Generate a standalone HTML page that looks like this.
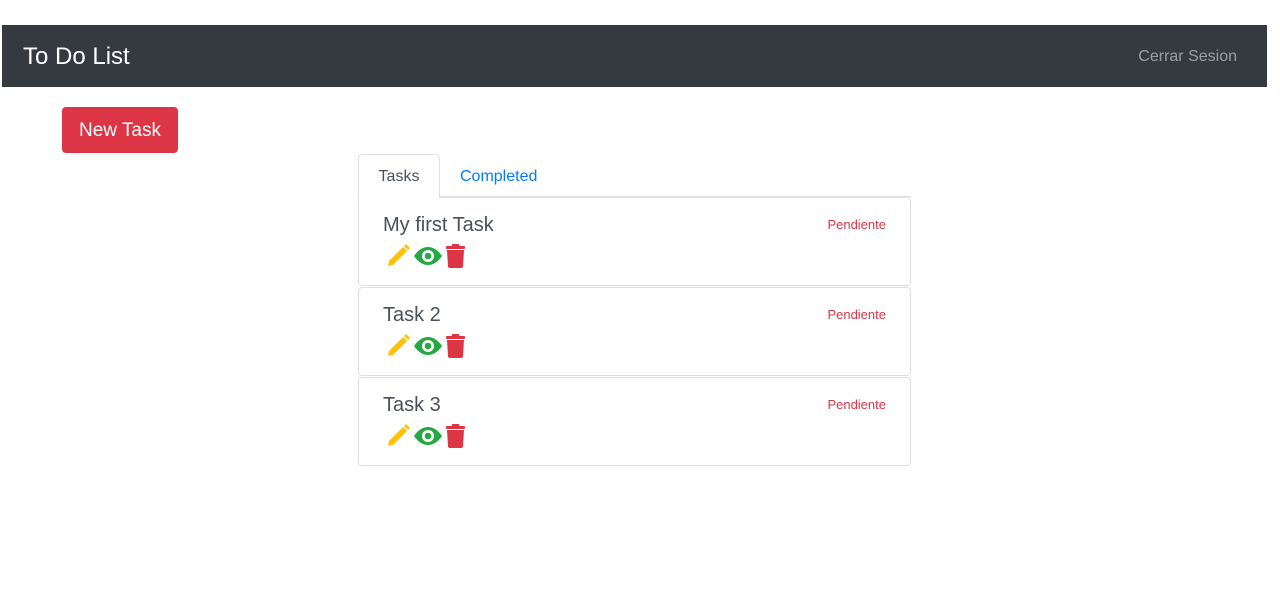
<!DOCTYPE html>
<html><head><style>
body{margin:0;background:#fff;font-family:"Liberation Sans",sans-serif;}
.nav{position:absolute;left:2px;top:25px;width:1265px;height:62px;background:#343a40;}
.brand{position:absolute;left:21px;top:18px;color:#fff;font-size:24px;}
.out{position:absolute;right:30px;top:23px;color:rgba(255,255,255,.5);font-size:16px;}
.btn{position:absolute;left:62px;top:107px;width:116px;height:46px;background:#dc3545;border-radius:4px;color:#fff;font-size:19px;line-height:48px;text-align:center;}
.tabs{position:absolute;left:358px;top:196px;width:553px;border-top:1px solid #dee2e6;}
.tab1{position:absolute;left:358px;top:154px;width:80px;height:43px;border:1px solid #dee2e6;border-bottom:1px solid #fff;border-radius:4px 4px 0 0;background:#fff;color:#495057;font-size:16px;line-height:43px;text-align:center;z-index:2}
.tab2{position:absolute;left:460px;top:155px;height:43px;line-height:43px;color:#007bff;font-size:16px;}
.card{position:absolute;left:358px;width:551px;height:87px;border:1px solid #dfdfdf;border-radius:4px;background:#fff;}
.t{position:absolute;left:24px;top:16px;font-size:20px;color:#495057;}
.p{position:absolute;right:24px;top:19px;font-size:13px;color:#dc3545;}
.ic{position:absolute;left:26px;top:45px;}
</style></head><body>
<div class="nav"><div class="brand">To Do List</div><div class="out">Cerrar Sesion</div></div>
<div class="btn">New Task</div>
<div class="tabs"></div>
<div class="tab1">Tasks</div><div class="tab2">Completed</div>
<div class="card" style="top:197px"><div class="t">My first Task</div><div class="p">Pendiente</div>
<svg class="ic" width="84" height="26" viewBox="0 0 84 26"><path d="M3 23l1-5L18 4l4 4L8 22z" fill="#ffc107"/><path d="M19 3l2-2 4 4-2 2z" fill="#ffc107"/><path d="M29 13c4-6 9-9 14-9s10 3 14 9c-4 6-9 9-14 9s-10-3-14-9z" fill="#28a745"/><circle cx="43" cy="13" r="6" fill="#fff"/><circle cx="43" cy="13" r="3.3" fill="#28a745"/><rect x="61" y="3" width="19" height="3" rx="1" fill="#dc3545"/><rect x="67" y="1" width="7" height="3" fill="#dc3545"/><path d="M62 7h17l-1 16q0 2-2 2h-11q-2 0-2-2z" fill="#dc3545"/></svg></div>
<div class="card" style="top:287px"><div class="t">Task 2</div><div class="p">Pendiente</div>
<svg class="ic" width="84" height="26" viewBox="0 0 84 26"><path d="M3 23l1-5L18 4l4 4L8 22z" fill="#ffc107"/><path d="M19 3l2-2 4 4-2 2z" fill="#ffc107"/><path d="M29 13c4-6 9-9 14-9s10 3 14 9c-4 6-9 9-14 9s-10-3-14-9z" fill="#28a745"/><circle cx="43" cy="13" r="6" fill="#fff"/><circle cx="43" cy="13" r="3.3" fill="#28a745"/><rect x="61" y="3" width="19" height="3" rx="1" fill="#dc3545"/><rect x="67" y="1" width="7" height="3" fill="#dc3545"/><path d="M62 7h17l-1 16q0 2-2 2h-11q-2 0-2-2z" fill="#dc3545"/></svg></div>
<div class="card" style="top:377px"><div class="t">Task 3</div><div class="p">Pendiente</div>
<svg class="ic" width="84" height="26" viewBox="0 0 84 26"><path d="M3 23l1-5L18 4l4 4L8 22z" fill="#ffc107"/><path d="M19 3l2-2 4 4-2 2z" fill="#ffc107"/><path d="M29 13c4-6 9-9 14-9s10 3 14 9c-4 6-9 9-14 9s-10-3-14-9z" fill="#28a745"/><circle cx="43" cy="13" r="6" fill="#fff"/><circle cx="43" cy="13" r="3.3" fill="#28a745"/><rect x="61" y="3" width="19" height="3" rx="1" fill="#dc3545"/><rect x="67" y="1" width="7" height="3" fill="#dc3545"/><path d="M62 7h17l-1 16q0 2-2 2h-11q-2 0-2-2z" fill="#dc3545"/></svg></div>
</body></html>
